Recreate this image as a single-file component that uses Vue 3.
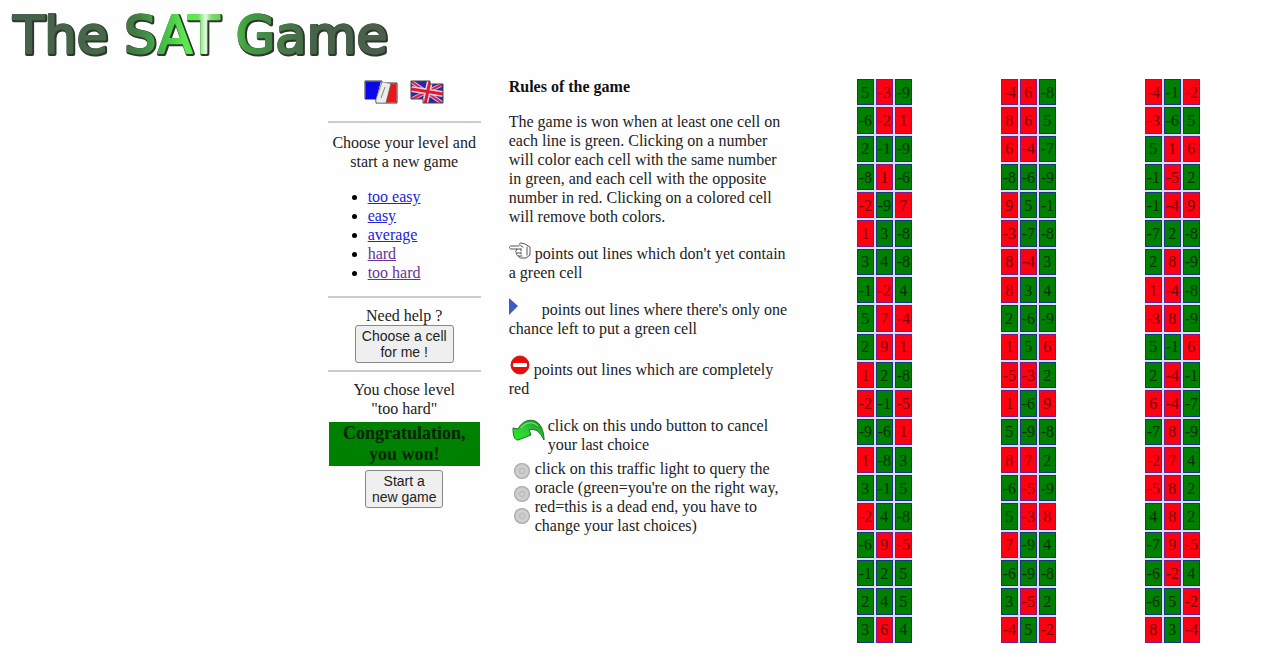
<script setup>
import { ref } from 'vue'

const levels = [
  { name: 'too easy', visited: false },
  { name: 'easy', visited: false },
  { name: 'average', visited: false },
  { name: 'hard', visited: true },
  { name: 'too hard', visited: true },
]

const chosen = ref(new Set([5, -9, -6, 2, -1, -8, 3, 4, -7]))

const boards = [
  [
    [5, -3, -9], [-6, -2, 1], [2, -1, -9], [-8, 1, -6], [-2, -9, 7],
    [1, 3, -8], [3, 4, -8], [-1, -2, 4], [5, 7, -4], [2, 9, 1],
    [1, 2, -8], [-2, -1, -5], [-9, -6, 1], [1, -8, 3], [3, -1, 5],
    [-2, 4, -8], [-6, 9, -5], [-1, 2, 5], [2, 4, 5], [3, 6, 4],
  ],
  [
    [-4, 6, -8], [8, 6, 5], [6, -4, -7], [-8, -6, -9], [9, 5, -1],
    [-3, -7, -8], [8, -4, 3], [8, 3, 4], [2, -6, -9], [1, 5, 6],
    [-5, -3, 2], [1, -6, 9], [5, -9, -8], [8, 7, 2], [-6, -5, -9],
    [5, -3, 8], [7, -9, 4], [-6, -9, -8], [3, -5, 2], [-4, 5, -2],
  ],
  [
    [-4, -1, -2], [-3, -6, 5], [5, 1, 6], [-1, -5, 2], [-1, -4, 9],
    [-7, 2, -8], [2, 8, -9], [1, -4, -8], [-3, 8, -9], [5, -1, 6],
    [2, -4, -1], [6, -4, -7], [-7, 8, -9], [-2, 7, 4], [-5, 8, 2],
    [4, 8, 2], [-7, 9, -5], [-6, -2, 4], [-6, 5, -2], [8, 3, -4],
  ],
]

function tone(n) {
  if (chosen.value.has(n)) return 'green'
  if (chosen.value.has(-n)) return 'red'
  return ''
}

function pick(n) {
  const next = new Set(chosen.value)
  const coloured = next.has(n) || next.has(-n)
  next.delete(n)
  next.delete(-n)
  if (!coloured) next.add(n)
  chosen.value = next
}
</script>

<template>
  <div class="page">
    <h1 class="logo">
      <svg width="400" height="70" viewBox="0 0 400 70">
        <defs>
          <linearGradient id="metal" gradientUnits="userSpaceOnUse" x1="10" y1="0" x2="390" y2="0">
            <stop offset="0" stop-color="#46604a" />
            <stop offset="0.25" stop-color="#466848" />
            <stop offset="0.34" stop-color="#408044" />
            <stop offset="0.41" stop-color="#48c048" />
            <stop offset="0.46" stop-color="#5ce850" />
            <stop offset="0.495" stop-color="#62e455" />
            <stop offset="0.515" stop-color="#e8f8e4" />
            <stop offset="0.53" stop-color="#7ddc6c" />
            <stop offset="0.62" stop-color="#42a040" />
            <stop offset="0.7" stop-color="#468048" />
            <stop offset="0.8" stop-color="#466448" />
            <stop offset="1" stop-color="#4a5e4c" />
          </linearGradient>
        </defs>
        <g class="word">
          <text class="edge" x="14" y="54">The SAT Game</text>
          <text class="face" x="13" y="53">The SAT Game</text>
        </g>
      </svg>
    </h1>

    <main class="content">
      <aside class="side">
        <div class="flags">
          <a href="#fr" aria-label="Français">
            <svg width="34" height="26" viewBox="0 0 34 26">
              <path d="M1 2H18V4H33V24H12V20H1Z" fill="#f4f4f4" stroke="#333" />
              <path d="M1.500 2.500H17L12 20H1.500Z" fill="#0808e8" />
              <path d="M17 3L26 5L22 23.500H12.500V20Z" fill="#ececec" />
              <path d="M27 4.500H32.500V23.500H22Z" fill="#e81818" />
              <path d="M18 3L12 20M27 4L22 24M21 8L17 19" stroke="#555" fill="none" opacity=".7" />
            </svg>
          </a>
          <a href="#en" aria-label="English">
            <svg width="34" height="26" viewBox="0 0 34 26">
              <clipPath id="cloth"><path d="M1 2H20V5H33V24H13V20H1Z" /></clipPath>
              <g clip-path="url(#cloth)">
                <path d="M1 2H33V24H1Z" fill="#2828a8" />
                <path d="M2 3L32 24M2 20L31 6" stroke="#e0b8dc" stroke-width="4" />
                <path d="M2 3L32 24M2 20L31 6" stroke="#d82048" stroke-width="2" />
                <path d="M20 2L15 25M1 10L33 15" stroke="#f0d0e0" stroke-width="6" />
                <path d="M20 2L15 25M1 10L33 15" stroke="#e01830" stroke-width="3" />
              </g>
              <path d="M1 2H20V5H33V24H13V20H1Z" fill="none" stroke="#444" />
            </svg>
          </a>
        </div>
        <hr />
        <p>Choose your level and start a new game</p>
        <ul>
          <li v-for="level in levels" :key="level.name">
            <a href="#" :class="{ visited: level.visited }">{{ level.name }}</a>
          </li>
        </ul>
        <hr class="tight" />
        <p>Need help ?</p>
        <button class="action" type="button">Choose a cell<br />for me !</button>
        <hr class="tight" />
        <p>You chose level<br />"too hard"</p>
        <div class="won">Congratulation, you won!</div>
        <button class="action" type="button">Start a<br />new game</button>
      </aside>

      <section class="rules">
        <h2>Rules of the game</h2>
        <p>
          The game is won when at least one cell on each line is green. Clicking on a number will
          color each cell with the same number in green, and each cell with the opposite number in
          red. Clicking on a colored cell will remove both colors.
        </p>
        <p>
          <svg class="mark" width="22" height="18" viewBox="0 0 22 18">
            <g fill="#fff" stroke="#555" stroke-linejoin="round" stroke-linecap="round">
              <path d="M10 4H2C0 4 0 7 2 7H8L7 9C6 10 7 11 8 11C7 13 8 14 10 14C10 16 11 16 13 16H17L21 13V5L16 2L12 1C10 1 10 3 12 4L14 5" />
              <path d="M8 7H12M8 11H12M10 14H13M12 7V9M12 11V12M18 5V13" fill="none" />
            </g>
          </svg>
          points out lines which don't yet contain a green cell
        </p>
        <p>
          <svg class="mark" width="29" height="18" viewBox="0 0 29 18">
            <path d="M0 0L9 8L0 17Z" fill="#3c5cc4" />
          </svg>
          points out lines where there's only one chance left to put a green cell
        </p>
        <p class="stop">
          <svg class="mark" width="21" height="22" viewBox="0 0 21 22">
            <circle cx="11" cy="11" r="9" fill="#e80c0c" stroke="#c81818" />
            <rect x="4" y="9" width="14" height="4" rx="1" fill="#fff" />
          </svg>
          points out lines which are completely red
        </p>
        <div class="tool undo">
          <svg width="36" height="28" viewBox="0 0 36 28">
            <defs>
              <linearGradient id="leaf" x1="1" y1="0" x2="0" y2="1">
                <stop offset="0" stop-color="#168a20" />
                <stop offset="0.5" stop-color="#30c838" />
                <stop offset="1" stop-color="#20f020" />
              </linearGradient>
            </defs>
            <path d="M4 12L9 13C13 5 20 3 26 5C32 8 35 15 35 24C31 16 27 12 20 14L22 19L9 24C5 24 4 19 4 12Z" fill="url(#leaf)" stroke="#187020" />
            <path d="M12 12C17 6 24 5 29 10" fill="none" stroke="#8ae88a" />
          </svg>
          <p>click on this undo button to cancel your last choice</p>
        </div>
        <div class="tool light">
          <svg width="18" height="66" viewBox="0 0 18 66">
            <defs>
              <radialGradient id="lamp" cx="0.5" cy="0.5" r="0.5">
                <stop offset="0" stop-color="#dcdcdc" />
                <stop offset="0.3" stop-color="#bcbcbc" />
                <stop offset="0.6" stop-color="#d4d4d4" />
                <stop offset="0.8" stop-color="#c4c4c4" />
                <stop offset="1" stop-color="#9c9c9c" />
              </radialGradient>
            </defs>
            <circle v-for="y in [12, 35, 57]" :key="y" cx="9" :cy="y" r="8" fill="url(#lamp)" />
          </svg>
          <p>
            click on this traffic light to query the oracle (green=you're on the right way, red=this
            is a dead end, you have to change your last choices)
          </p>
        </div>
      </section>

      <section class="boards">
        <div v-for="(board, b) in boards" :key="b" class="board">
          <template v-for="(line, r) in board" :key="r">
            <button
              v-for="(n, c) in line"
              :key="c"
              type="button"
              class="cell"
              :class="tone(n)"
              @click="pick(n)"
            >{{ n }}</button>
          </template>
        </div>
      </section>
    </main>
  </div>
</template>

<style>
body {
  margin: 0;
  background: #fefefe;
}
</style>

<style scoped>
.page {
  display: flex;
  flex-direction: column;
  box-sizing: border-box;
  min-height: 100vh;
  color: #222;
  font: 16px/19px "Liberation Serif", "Times New Roman", serif;
}
.logo {
  margin: 0;
  height: 77px;
}
.logo svg {
  display: block;
}
.word {
  font: 51px "DejaVu Sans", sans-serif;
  stroke-linejoin: round;
}
.edge {
  fill: #2c382c;
  stroke: #2c382c;
  stroke-width: 4px;
}
.face {
  fill: url(#metal);
  stroke: url(#metal);
  stroke-width: 2px;
}
.content {
  flex: 1;
  display: grid;
  grid-template-columns: 153fr 348fr 451fr;
  padding-left: 25.6%;
}
p {
  margin: 0;
}
.side {
  text-align: center;
}
.flags {
  display: flex;
  justify-content: center;
  gap: 12px;
  padding: 2px 0 16px;
}
.flags svg {
  display: block;
}
hr {
  margin: 0 0 10px;
  border: 0;
  border-top: 2px solid #ccc;
}
ul {
  margin: 16px 0 14px;
  padding-left: 40px;
  text-align: left;
}
li::marker {
  color: #000;
}
a {
  color: #2222dd;
}
a.visited {
  color: #66339a;
}
.action {
  padding: 2px 6px;
  border: 1px solid #888;
  border-radius: 3px;
  background: #efefef;
  color: #222;
  font: 14px/16px "Liberation Sans", Arial, sans-serif;
}
hr.tight {
  margin: 7px 0 8px;
}
.won {
  margin: 4px 1px;
  padding: 1px 0;
  background: #008000;
  color: #042404;
  font-size: 18px;
  font-weight: bold;
  line-height: 21px;
}
.rules {
  padding: 0 38px 0 28px;
}
h2 {
  margin: 0 0 16px;
  color: #111;
  font-size: 16px;
  line-height: 19px;
}
.rules > p {
  margin-bottom: 16px;
}
.mark {
  vertical-align: -1px;
}
.rules > .stop {
  margin-bottom: 18px;
}
.tool {
  display: flex;
}
.undo {
  gap: 3px;
  margin-bottom: 5px;
}
.tool svg {
  flex: none;
}
.light {
  gap: 4px;
}
.light svg {
  margin-left: 4px;
}
.light p {
  margin-right: -4px;
}
.boards {
  display: flex;
  gap: 89px;
  padding: 2px 0 12px 28px;
}
.board {
  display: grid;
  grid-template-columns: repeat(3, 17px);
  grid-auto-rows: 1fr;
  gap: 2px;
  background: #dcdcfa;
}
.cell {
  min-height: 24px;
  padding: 0;
  border: 1px solid #3a3a9c;
  background: #fff;
  color: #222;
  font: inherit;
  text-align: center;
  white-space: nowrap;
}
.cell.green {
  border-color: #14387c;
  background: #008000;
  color: #043004;
}
.cell.red {
  border-color: #74208c;
  background: #ff0010;
  color: #780606;
}
</style>
